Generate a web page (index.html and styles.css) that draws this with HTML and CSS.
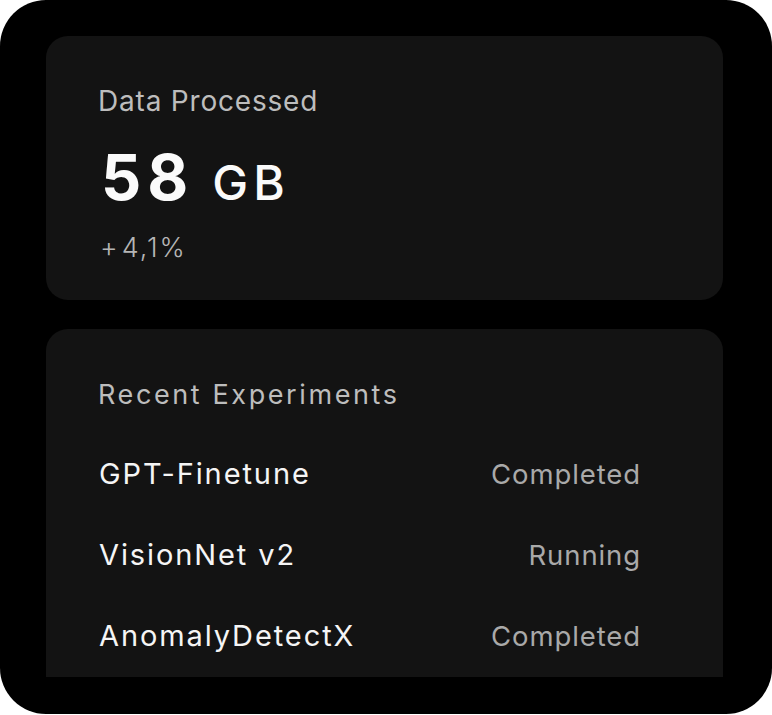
FILE: index.html
```html
<!DOCTYPE html>
<html lang="en">
<head>
<meta charset="utf-8">
<title>Dashboard</title>
<link rel="stylesheet" href="styles.css">
</head>
<body>
<div class="frame">
  <section class="card card-stat">
    <div class="label">Data Processed</div>
    <div class="value"><span class="num">58</span><span class="unit">GB</span></div>
    <div class="delta"><span class="sign">+</span>4,1%</div>
  </section>
  <section class="card card-list">
    <div class="label label-list">Recent Experiments</div>
    <ul class="rows">
      <li class="row"><span class="name">GPT-Finetune</span><span class="status">Completed</span></li>
      <li class="row"><span class="name">VisionNet v2</span><span class="status">Running</span></li>
      <li class="row"><span class="name">AnomalyDetectX</span><span class="status">Completed</span></li>
    </ul>
  </section>
</div>
</body>
</html>
```
FILE: styles.css
```css
* { box-sizing: border-box; }
html, body { margin: 0; padding: 0; background: #fff; }
body { font-family: Inter, "Noto Sans", "Liberation Sans", sans-serif; }
.frame {
  width: 772px;
  height: 714px;
  background: #000;
  border-radius: 46px;
  padding: 36px 49px 0 46px;
  display: flex;
  flex-direction: column;
  gap: 29px;
  overflow: hidden;
}
.card { background: #131313; border-radius: 22px; }
.card-stat { height: 264px; padding: 51px 52px 0; }
.card-list { height: 348px; padding: 52px 82px 0 52px; border-radius: 22px 22px 0 0; }
.label { font-size: 28px; line-height: 28px; color: #bdbdbd; letter-spacing: 0.8px; }
.label-list { font-size: 27px; line-height: 27px; letter-spacing: 2.6px; }
.value { margin-top: 31px; line-height: 62px; height: 62px; color: #fafafa; display: flex; align-items: baseline; padding-left: 3px; }
.num { font-size: 63px; font-weight: 700; letter-spacing: 6px; }
.unit { font-size: 48px; font-weight: 500; margin-left: 18px; letter-spacing: 5px; }
.delta { margin-top: 26px; font-size: 27px; line-height: 27px; color: #b5b5b5; font-weight: 300; letter-spacing: 2px; padding-left: 2px; }
.sign { margin-right: 2px; }
.rows { list-style: none; margin: 51px 0 0; padding: 0 0 0 1px; display: flex; flex-direction: column; gap: 51px; }
.row { display: flex; justify-content: space-between; align-items: baseline; line-height: 29px; }
.name { color: #f5f5f5; font-size: 29px; letter-spacing: 1.9px; }
.status { color: #a9a9a9; font-size: 27.5px; letter-spacing: 0.9px; }
```
